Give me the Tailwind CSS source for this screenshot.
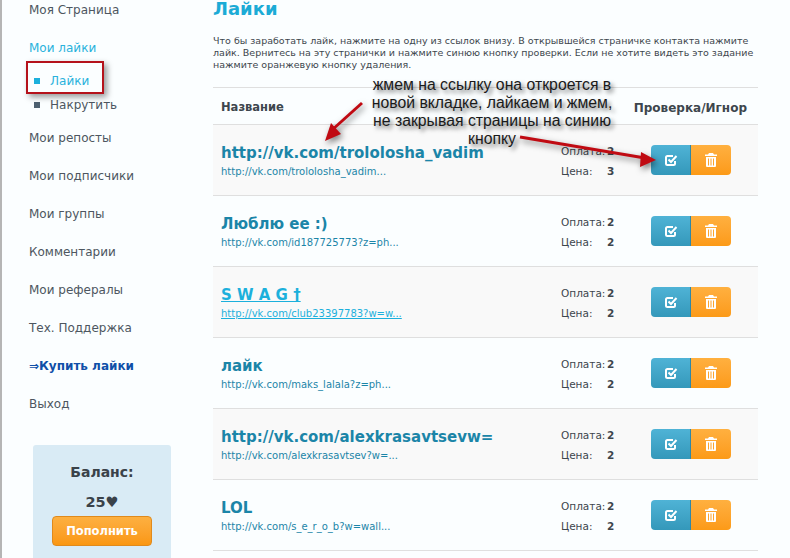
<!DOCTYPE html>
<html lang="ru">
<head>
  <meta charset="UTF-8">
  <title>Лайки</title>
  <script src="https://cdn.jsdelivr.net/npm/@tailwindcss/browser@4"></script>
</head>
<body class="bg-[#fbfeff] font-['DejaVu_Sans',sans-serif] text-[#3d464d]">
<div class="relative w-[790px] h-[558px] overflow-hidden flex border-l-2 border-[#b5b5b5]">

  <!-- Sidebar -->
  <div class="w-[211px] shrink-0 pl-[27px] text-[12px] leading-[20px] text-[#4d5660]">
    <div>Моя Страница</div>
    <div class="mt-[18px] text-[#29b2dc]">Мои лайки</div>
    <div class="mt-[13px] flex items-center text-[#29b2dc]"><span class="w-[6px] h-[6px] ml-[5px] mr-[10px] bg-[#1cb0dc]"></span>Лайки</div>
    <div class="mt-[4px] flex items-center"><span class="w-[6px] h-[6px] ml-[5px] mr-[10px] bg-[#4d6070]"></span>Накрутить</div>
    <div class="mt-[13px]">Мои репосты</div>
    <div class="mt-[18px]">Мои подписчики</div>
    <div class="mt-[18px]">Мои группы</div>
    <div class="mt-[18px]">Комментарии</div>
    <div class="mt-[18px]">Мои рефералы</div>
    <div class="mt-[18px]">Тех. Поддержка</div>
    <div class="mt-[18px] font-bold text-[#0f4fa8]">⇒Купить лайки</div>
    <div class="mt-[18px]">Выход</div>

    <div class="mt-[31px] ml-[4px] w-[138px] h-[130px] bg-[#d9ebf5] rounded-[3px] flex flex-col items-center pt-[15px]">
      <div class="text-[14px] font-bold leading-[24px] text-[#3a4249]">Баланс:</div>
      <div class="mt-[6px] text-[14.500px] font-bold leading-[24px] text-[#3a4249]">25♥</div>
      <div class="mt-[2px] w-[100px] h-[30px] rounded-[4px] border border-[#e08a1c] bg-gradient-to-b from-[#fdb040] to-[#fa9710] flex items-center justify-center text-white text-[11.500px] font-bold">Пополнить</div>
    </div>
  </div>

  <!-- Content -->
  <div class="w-[545px] shrink-0">
    <h1 class="text-[18px] font-bold leading-[18px] text-[#1cabd6]">Лайки</h1>
    <p class="mt-[17px] w-[545px] text-[9.500px] leading-[12px] text-[#3d464d]">Что бы заработать лайк, нажмите на одну из ссылок внизу. В открывшейся страничке контакта нажмите лайк. Вернитесь на эту странички и нажмите синюю кнопку проверки. Если не хотите видеть это задание нажмите оранжевую кнопку удаления.</p>

    <div class="mt-[16px] border-t border-[#dfdfdf] h-[37px] pt-[3px] flex items-center justify-between pl-[8px] pr-[11px] text-[11.500px] font-bold text-[#3d464d]">
      <span>Название</span><span class="text-[12px]">Проверка/Игнор</span>
    </div>

    <div class="border-t border-[#dfdfdf] h-[71px] bg-[#f9f9f9] flex items-center pl-[8px]">
      <div class="w-[340px] pt-[3px]">
        <div class="text-[15px] font-bold leading-[19px] text-[#1b85a8]">http://vk.com/trololosha_vadim</div>
        <div class="mt-[1px] text-[10px] leading-[16px] text-[#1b85a8]">http://vk.com/trololosha_vadim...</div>
      </div>
      <div class="w-[90px] pt-[2px] text-[10.500px] leading-[20px]">
        <div class="flex"><span class="w-[46px]">Оплата:</span><b>2</b></div>
        <div class="flex"><span class="w-[46px]">Цена:</span><b>3</b></div>
      </div>
      <div class="flex h-[30px] w-[80px] rounded-[4px] overflow-hidden">
        <div class="w-[40px] border-r border-[#2f87a8] bg-gradient-to-b from-[#4fb3d6] to-[#3498ba] flex items-center justify-center">
          <svg class="w-[14px] h-[14px]" viewBox="0 0 14 14" fill="none" stroke="white" stroke-width="2"><path d="M11 8v2.5a1.5 1.5 0 0 1-1.5 1.5h-6A1.5 1.5 0 0 1 2 10.500v-6A1.500 1.500 0 0 1 3.500 3H9"/><path d="M4.500 6.500l2.500 2.500 5.500-6"/></svg>
        </div>
        <div class="w-[40px] bg-gradient-to-b from-[#ffb03f] to-[#fc9a16] flex items-center justify-center">
          <svg class="w-[12px] h-[14px]" viewBox="0 0 12 14" fill="white"><path d="M4 0h4l1 1.500h3v1.500H0V1.500h3zM1 4h10v9a1 1 0 0 1-1 1H2a1 1 0 0 1-1-1zm2 1.500v7h1v-7zm2.500 0v7h1v-7zm2.500 0v7h1v-7z" fill-rule="evenodd"/></svg>
        </div>
      </div>
    </div>

    <div class="border-t border-[#dfdfdf] h-[71px] flex items-center pl-[8px]">
      <div class="w-[340px] pt-[3px]">
        <div class="text-[15px] font-bold leading-[19px] text-[#1b85a8]">Люблю ее :)</div>
        <div class="mt-[1px] text-[10px] leading-[16px] text-[#1b85a8]">http://vk.com/id187725773?z=ph...</div>
      </div>
      <div class="w-[90px] pt-[2px] text-[10.500px] leading-[20px]">
        <div class="flex"><span class="w-[46px]">Оплата:</span><b>2</b></div>
        <div class="flex"><span class="w-[46px]">Цена:</span><b>2</b></div>
      </div>
      <div class="flex h-[30px] w-[80px] rounded-[4px] overflow-hidden">
        <div class="w-[40px] border-r border-[#2f87a8] bg-gradient-to-b from-[#4fb3d6] to-[#3498ba] flex items-center justify-center">
          <svg class="w-[14px] h-[14px]" viewBox="0 0 14 14" fill="none" stroke="white" stroke-width="2"><path d="M11 8v2.5a1.5 1.5 0 0 1-1.5 1.5h-6A1.5 1.5 0 0 1 2 10.500v-6A1.500 1.500 0 0 1 3.500 3H9"/><path d="M4.500 6.500l2.500 2.500 5.500-6"/></svg>
        </div>
        <div class="w-[40px] bg-gradient-to-b from-[#ffb03f] to-[#fc9a16] flex items-center justify-center">
          <svg class="w-[12px] h-[14px]" viewBox="0 0 12 14" fill="white"><path d="M4 0h4l1 1.500h3v1.500H0V1.500h3zM1 4h10v9a1 1 0 0 1-1 1H2a1 1 0 0 1-1-1zm2 1.500v7h1v-7zm2.500 0v7h1v-7zm2.500 0v7h1v-7z" fill-rule="evenodd"/></svg>
        </div>
      </div>
    </div>

    <div class="border-t border-[#dfdfdf] h-[71px] bg-[#f9f9f9] flex items-center pl-[8px]">
      <div class="w-[340px] pt-[3px]">
        <div class="text-[15px] font-bold leading-[19px] text-[#1cb0dc] underline">S W A G †</div>
        <div class="mt-[1px] text-[10px] leading-[16px] text-[#1cb0dc] underline">http://vk.com/club23397783?w=w...</div>
      </div>
      <div class="w-[90px] pt-[2px] text-[10.500px] leading-[20px]">
        <div class="flex"><span class="w-[46px]">Оплата:</span><b>2</b></div>
        <div class="flex"><span class="w-[46px]">Цена:</span><b>2</b></div>
      </div>
      <div class="flex h-[30px] w-[80px] rounded-[4px] overflow-hidden">
        <div class="w-[40px] border-r border-[#2f87a8] bg-gradient-to-b from-[#4fb3d6] to-[#3498ba] flex items-center justify-center">
          <svg class="w-[14px] h-[14px]" viewBox="0 0 14 14" fill="none" stroke="white" stroke-width="2"><path d="M11 8v2.5a1.5 1.5 0 0 1-1.5 1.5h-6A1.5 1.5 0 0 1 2 10.500v-6A1.500 1.500 0 0 1 3.500 3H9"/><path d="M4.500 6.500l2.500 2.500 5.500-6"/></svg>
        </div>
        <div class="w-[40px] bg-gradient-to-b from-[#ffb03f] to-[#fc9a16] flex items-center justify-center">
          <svg class="w-[12px] h-[14px]" viewBox="0 0 12 14" fill="white"><path d="M4 0h4l1 1.500h3v1.500H0V1.500h3zM1 4h10v9a1 1 0 0 1-1 1H2a1 1 0 0 1-1-1zm2 1.500v7h1v-7zm2.500 0v7h1v-7zm2.500 0v7h1v-7z" fill-rule="evenodd"/></svg>
        </div>
      </div>
    </div>

    <div class="border-t border-[#dfdfdf] h-[71px] flex items-center pl-[8px]">
      <div class="w-[340px] pt-[3px]">
        <div class="text-[15px] font-bold leading-[19px] text-[#1b85a8]">лайк</div>
        <div class="mt-[1px] text-[10px] leading-[16px] text-[#1b85a8]">http://vk.com/maks_lalala?z=ph...</div>
      </div>
      <div class="w-[90px] pt-[2px] text-[10.500px] leading-[20px]">
        <div class="flex"><span class="w-[46px]">Оплата:</span><b>2</b></div>
        <div class="flex"><span class="w-[46px]">Цена:</span><b>2</b></div>
      </div>
      <div class="flex h-[30px] w-[80px] rounded-[4px] overflow-hidden">
        <div class="w-[40px] border-r border-[#2f87a8] bg-gradient-to-b from-[#4fb3d6] to-[#3498ba] flex items-center justify-center">
          <svg class="w-[14px] h-[14px]" viewBox="0 0 14 14" fill="none" stroke="white" stroke-width="2"><path d="M11 8v2.5a1.5 1.5 0 0 1-1.5 1.5h-6A1.5 1.5 0 0 1 2 10.500v-6A1.500 1.500 0 0 1 3.500 3H9"/><path d="M4.500 6.500l2.500 2.500 5.500-6"/></svg>
        </div>
        <div class="w-[40px] bg-gradient-to-b from-[#ffb03f] to-[#fc9a16] flex items-center justify-center">
          <svg class="w-[12px] h-[14px]" viewBox="0 0 12 14" fill="white"><path d="M4 0h4l1 1.500h3v1.500H0V1.500h3zM1 4h10v9a1 1 0 0 1-1 1H2a1 1 0 0 1-1-1zm2 1.500v7h1v-7zm2.500 0v7h1v-7zm2.500 0v7h1v-7z" fill-rule="evenodd"/></svg>
        </div>
      </div>
    </div>

    <div class="border-t border-[#dfdfdf] h-[71px] bg-[#f9f9f9] flex items-center pl-[8px]">
      <div class="w-[340px] pt-[3px]">
        <div class="text-[15px] font-bold leading-[19px] text-[#1b85a8]">http://vk.com/alexkrasavtsevw=</div>
        <div class="mt-[1px] text-[10px] leading-[16px] text-[#1b85a8]">http://vk.com/alexkrasavtsev?w=...</div>
      </div>
      <div class="w-[90px] pt-[2px] text-[10.500px] leading-[20px]">
        <div class="flex"><span class="w-[46px]">Оплата:</span><b>2</b></div>
        <div class="flex"><span class="w-[46px]">Цена:</span><b>2</b></div>
      </div>
      <div class="flex h-[30px] w-[80px] rounded-[4px] overflow-hidden">
        <div class="w-[40px] border-r border-[#2f87a8] bg-gradient-to-b from-[#4fb3d6] to-[#3498ba] flex items-center justify-center">
          <svg class="w-[14px] h-[14px]" viewBox="0 0 14 14" fill="none" stroke="white" stroke-width="2"><path d="M11 8v2.5a1.5 1.5 0 0 1-1.5 1.5h-6A1.5 1.5 0 0 1 2 10.500v-6A1.500 1.500 0 0 1 3.500 3H9"/><path d="M4.500 6.500l2.500 2.500 5.500-6"/></svg>
        </div>
        <div class="w-[40px] bg-gradient-to-b from-[#ffb03f] to-[#fc9a16] flex items-center justify-center">
          <svg class="w-[12px] h-[14px]" viewBox="0 0 12 14" fill="white"><path d="M4 0h4l1 1.500h3v1.500H0V1.500h3zM1 4h10v9a1 1 0 0 1-1 1H2a1 1 0 0 1-1-1zm2 1.500v7h1v-7zm2.500 0v7h1v-7zm2.500 0v7h1v-7z" fill-rule="evenodd"/></svg>
        </div>
      </div>
    </div>

    <div class="border-t border-b border-[#dfdfdf] h-[72px] flex items-center pl-[8px]">
      <div class="w-[340px] pt-[3px]">
        <div class="text-[15px] font-bold leading-[19px] text-[#1b85a8]">LOL</div>
        <div class="mt-[1px] text-[10px] leading-[16px] text-[#1b85a8]">http://vk.com/s_e_r_o_b?w=wall...</div>
      </div>
      <div class="w-[90px] pt-[2px] text-[10.500px] leading-[20px]">
        <div class="flex"><span class="w-[46px]">Оплата:</span><b>2</b></div>
        <div class="flex"><span class="w-[46px]">Цена:</span><b>2</b></div>
      </div>
      <div class="flex h-[30px] w-[80px] rounded-[4px] overflow-hidden">
        <div class="w-[40px] border-r border-[#2f87a8] bg-gradient-to-b from-[#4fb3d6] to-[#3498ba] flex items-center justify-center">
          <svg class="w-[14px] h-[14px]" viewBox="0 0 14 14" fill="none" stroke="white" stroke-width="2"><path d="M11 8v2.5a1.5 1.5 0 0 1-1.5 1.5h-6A1.5 1.5 0 0 1 2 10.500v-6A1.500 1.500 0 0 1 3.500 3H9"/><path d="M4.500 6.500l2.500 2.500 5.500-6"/></svg>
        </div>
        <div class="w-[40px] bg-gradient-to-b from-[#ffb03f] to-[#fc9a16] flex items-center justify-center">
          <svg class="w-[12px] h-[14px]" viewBox="0 0 12 14" fill="white"><path d="M4 0h4l1 1.500h3v1.500H0V1.500h3zM1 4h10v9a1 1 0 0 1-1 1H2a1 1 0 0 1-1-1zm2 1.500v7h1v-7zm2.500 0v7h1v-7zm2.500 0v7h1v-7z" fill-rule="evenodd"/></svg>
        </div>
      </div>
    </div>
  </div>

  <!-- Annotations drawn over the page -->
  <div class="absolute left-[24px] top-[61px] w-[78px] h-[33px] border-[2px] border-[#b5121b] shadow-[3px_3px_6px_rgba(0,0,0,0.4)]"></div>
  <div class="absolute left-[340px] top-[76px] w-[300px] text-center font-['Liberation_Sans',sans-serif] text-[15.800px] leading-[18px] text-[#1a1a1a] [text-shadow:3px_3px_4px_rgba(0,0,0,0.55)]">жмем на ссылку она откроется в<br>новой вкладке, лайкаем и жмем,<br>не закрывая страницы на синию<br>кнопку</div>
  <svg class="absolute left-[-2px] top-0 [filter:drop-shadow(2px_3px_3px_rgba(0,0,0,0.5))]" width="790" height="558" viewBox="0 0 790 558" fill="#c00a12" stroke="none">
    <path d="M362 103L332 130" stroke="#c00a12" stroke-width="3"/>
    <path d="M325 141L331 123L341 134z"/>
    <path d="M520 137L645 158" stroke="#c00a12" stroke-width="3"/>
    <path d="M656 160L641 152L640 167z"/>
  </svg>
</div>
</body>
</html>
